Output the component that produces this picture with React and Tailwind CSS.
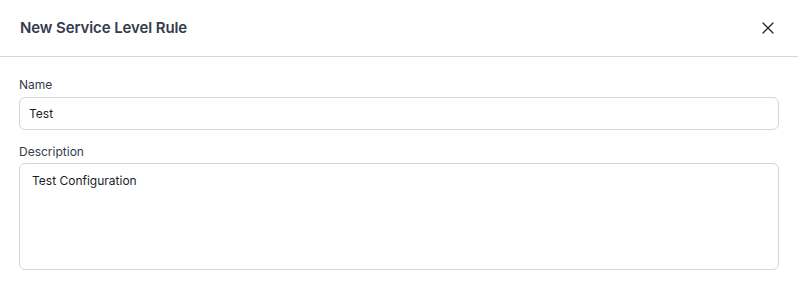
import { X } from 'lucide-react'

export default function App() {
  return (
    <div className="w-[798px] h-[281px] bg-white font-['Inter',sans-serif] text-[#1f2937]">
      {/* Header */}
      <div className="flex items-center justify-between h-[57px] px-5 border-b border-[#d4d6dd]">
        <h2 className="text-[15px] font-semibold text-[#343b4c] tracking-[-0.1px]">New Service Level Rule</h2>
        <button className="w-6 h-6 flex items-center justify-center mr-[-2px] text-[#1f2433]">
          <X size={20} strokeWidth={1.5} />
        </button>
      </div>

      {/* Form */}
      <div className="px-[19px] pt-[20px] flex flex-col">
        <label className="text-[12px] leading-4 text-[#343b4c] mb-[4px]">Name</label>
        <input
          defaultValue="Test"
          className="h-[33px] w-[760px] rounded-[6px] border border-[#d4d6dd] px-[9px] text-[12px] text-[#1a1d29] outline-none"
        />
        <label className="text-[12px] leading-4 text-[#343b4c] mt-[14px] mb-[3px]">Description</label>
        <textarea
          defaultValue="Test Configuration"
          className="h-[107px] w-[760px] rounded-[6px] border border-[#d4d6dd] px-[12px] py-[9px] text-[12px] leading-4 text-[#1a1d29] outline-none resize-none"
        />
      </div>
    </div>
  )
}
